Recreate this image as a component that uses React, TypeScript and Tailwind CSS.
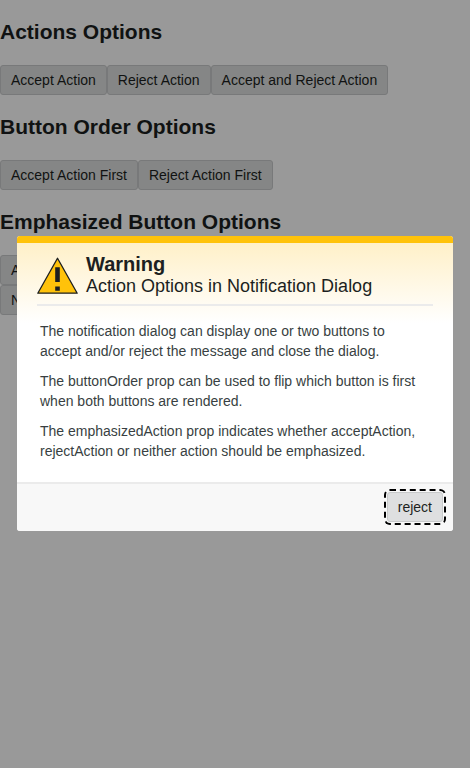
import type { ReactNode } from 'react';

function OptionButton({ children }: { children: ReactNode }) {
  return (
    <button
      type="button"
      className="h-[30px] rounded-[3px] border border-[#c8cacb] bg-[#dedfe0] px-2.5 text-sm text-[#1c1f21]"
    >
      {children}
    </button>
  );
}

function OptionGroup({ title, options }: { title: string; options: string[] }) {
  return (
    <section>
      <h2 className="pt-5 pb-[21px] text-[21px] leading-6 font-bold">{title}</h2>
      <div className="flex flex-wrap">
        {options.map((option) => (
          <OptionButton key={option}>{option}</OptionButton>
        ))}
      </div>
    </section>
  );
}

function WarningIcon() {
  return (
    <svg viewBox="0 0 41 38" className="h-[38px] w-[41px] shrink-0" aria-hidden="true">
      <path d="M20.5 2.2 40.2 37.2H.8Z" fill="#ffc20a" stroke="#1c1f21" strokeWidth="1.3" strokeLinejoin="round" />
      <path d="M18.2 11.3h4.6v14.8h-4.6ZM18.2 30.6h4.6v4.2h-4.6Z" fill="#1c1f21" />
    </svg>
  );
}

export default function App() {
  return (
    <div className="min-h-screen bg-white font-['Liberation_Sans',Arial,sans-serif] text-[#1c1f21]">
      <main>
        <OptionGroup
          title="Actions Options"
          options={['Accept Action', 'Reject Action', 'Accept and Reject Action']}
        />
        <OptionGroup title="Button Order Options" options={['Accept Action First', 'Reject Action First']} />
        <OptionGroup
          title="Emphasized Button Options"
          options={['Accept Action Emphasized', 'Reject Action Emphasized', 'No Emphasized Action']}
        />
      </main>

      <div className="fixed inset-0 flex items-center justify-center bg-black/40 px-[17px] pb-px">
        <div
          role="dialog"
          aria-modal="true"
          aria-labelledby="dialog-title"
          className="w-full max-w-[600px] overflow-hidden rounded-[3px] bg-white"
        >
          <div className="h-[7px] bg-[#ffc20a]" />
          <div className="bg-linear-to-b from-[#fff0c8] to-white to-[80px] px-5">
            <header className="flex items-center gap-2 border-b-2 border-[#ebebeb] pt-2.5 pb-[7px]">
              <WarningIcon />
              <div id="dialog-title">
                <div className="text-xl leading-[22px] font-bold">Warning</div>
                <div className="text-lg leading-[22px]">Action Options in Notification Dialog</div>
              </div>
            </header>
            <div className="space-y-2.5 pt-[15px] pr-3 pb-[21px] pl-[3px] text-sm leading-5 text-[#383f42]">
              <p>The notification dialog can display one or two buttons to accept and/or reject the message and close the dialog.</p>
              <p>The buttonOrder prop can be used to flip which button is first when both buttons are rendered.</p>
              <p>The emphasizedAction prop indicates whether acceptAction, rejectAction or neither action should be emphasized.</p>
            </div>
          </div>
          <footer className="flex justify-end border-t-2 border-[#ebebeb] bg-[#f8f8f8] px-2.5 pt-2 pb-[9px]">
            <button
              type="button"
              className="h-[30px] rounded-[3px] border border-[#c8cacb] bg-[#dedfe0] px-2.5 text-sm outline-2 outline-offset-1 outline-dashed outline-black"
            >
              reject
            </button>
          </footer>
        </div>
      </div>
    </div>
  );
}
